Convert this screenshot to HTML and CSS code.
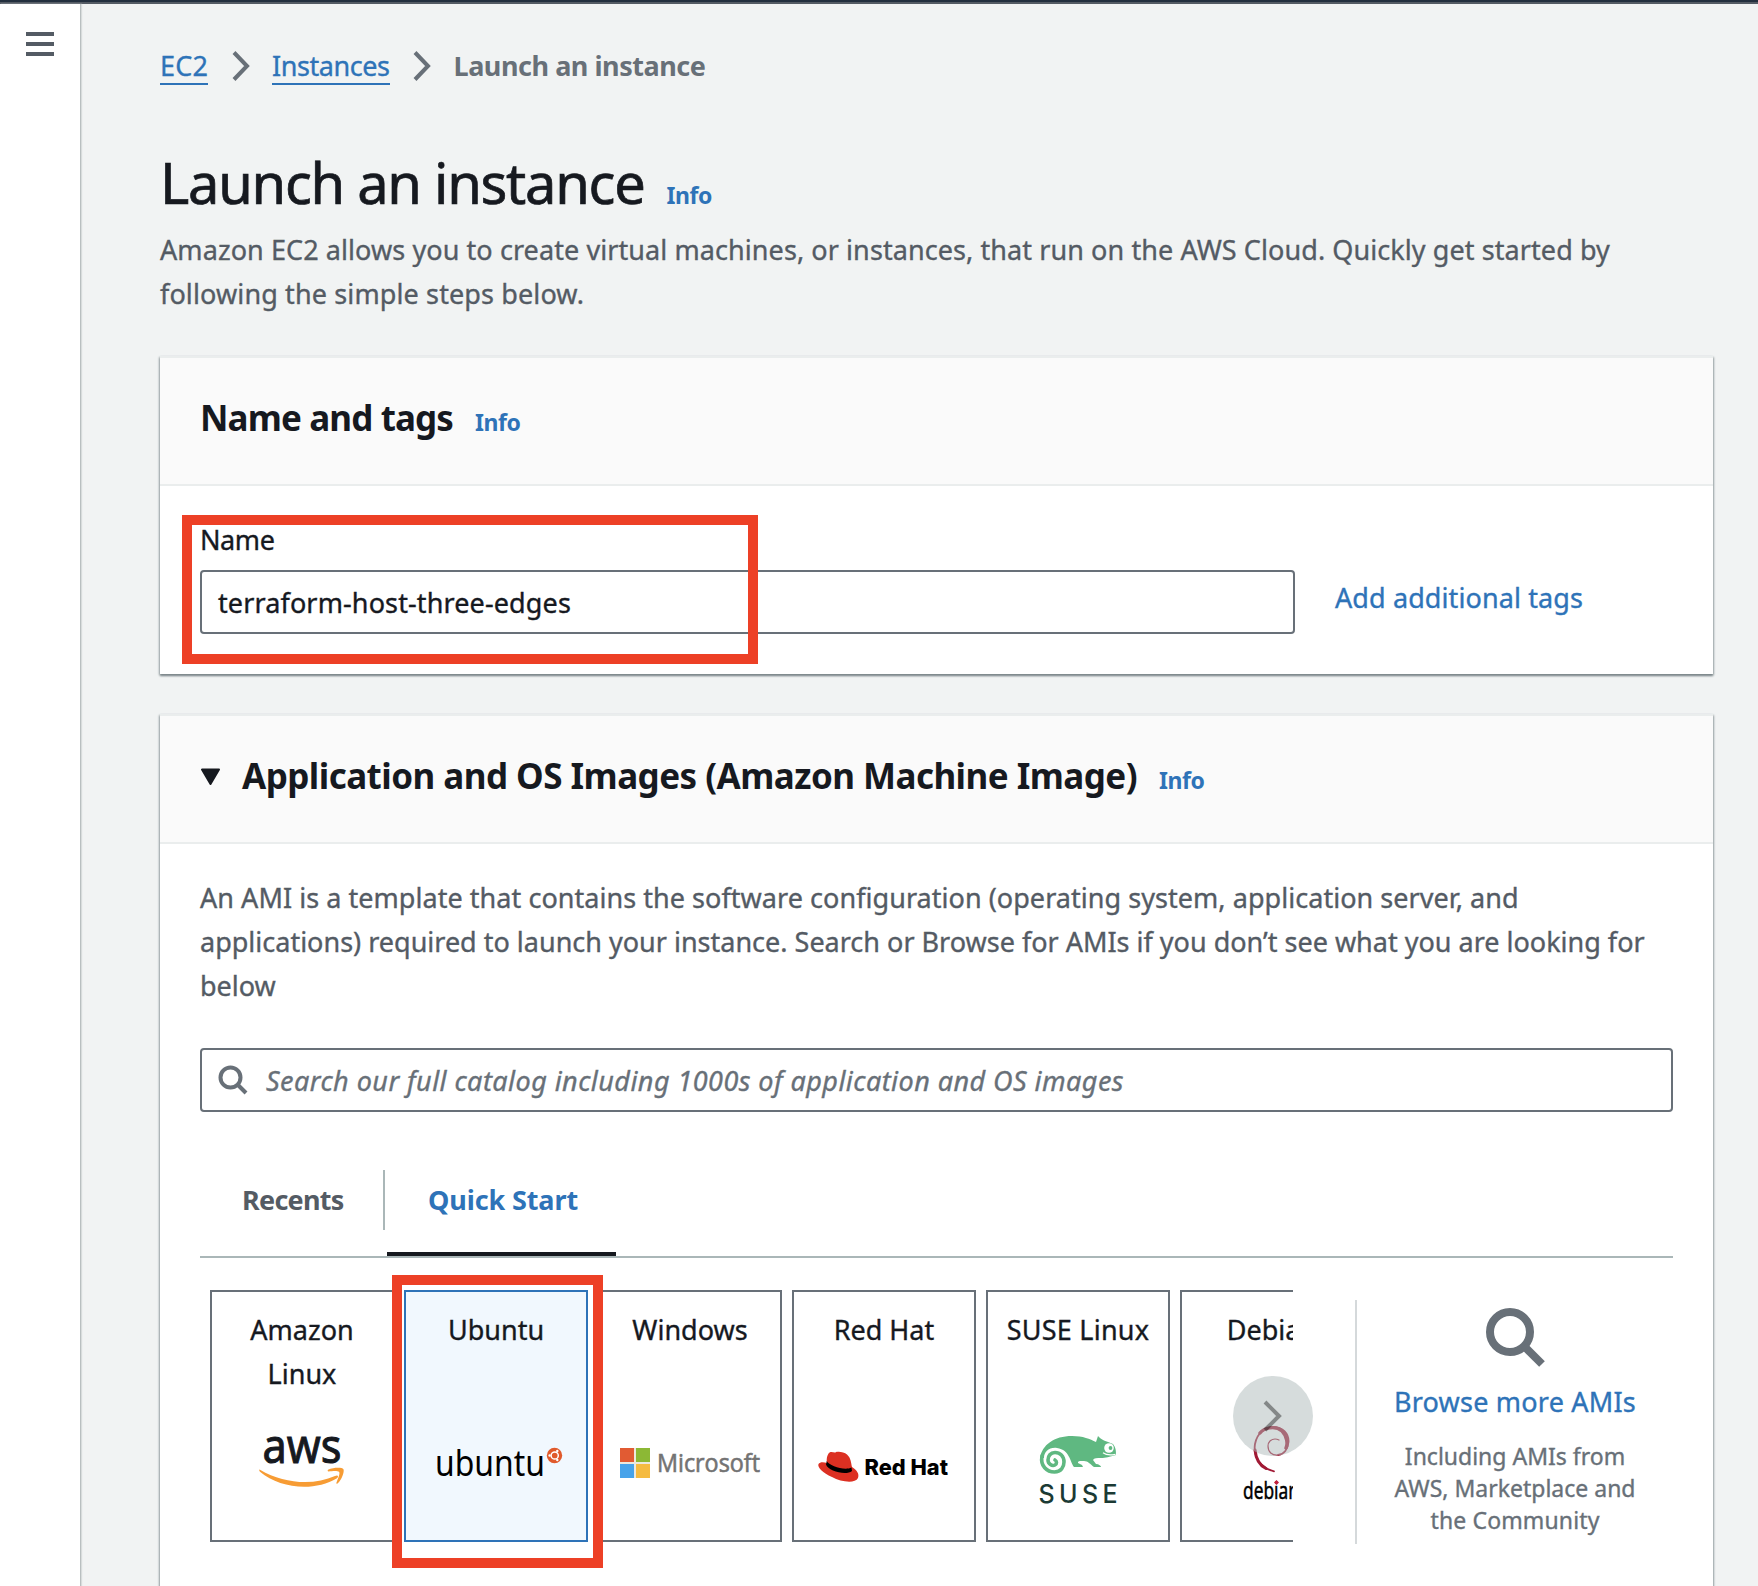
FILE: index.html
```html
<!DOCTYPE html>
<html lang="en">
<head>
<meta charset="utf-8">
<title>Launch an instance | EC2</title>
<link rel="stylesheet" href="styles.css">
</head>
<body>
<div class="topbar"></div>
<div class="shell">
  <nav class="sidebar">
    <button class="menu" aria-label="Open navigation"><span></span><span></span><span></span></button>
  </nav>
  <main class="main">
    <div class="breadcrumb">
      <a class="crumb crumb-ec2">EC2</a>
      <svg class="sep" width="18" height="30" viewBox="0 0 18 30"><path d="M2 1.5L15 15L2 28.5" fill="none" stroke="#687078" stroke-width="4"/></svg>
      <a class="crumb crumb-instances">Instances</a>
      <svg class="sep" width="18" height="30" viewBox="0 0 18 30"><path d="M2 1.5L15 15L2 28.5" fill="none" stroke="#687078" stroke-width="4"/></svg>
      <span class="crumb-current">Launch an instance</span>
    </div>
    <div class="title-row"><h1>Launch an instance</h1><a class="info">Info</a></div>
    <p class="intro"><span class="i1">Amazon EC2 allows you to create virtual machines, or instances, that run on the AWS Cloud. Quickly get started by</span><br><span class="i2">following the simple steps below.</span></p>

    <section class="card">
      <header class="card-head"><h2 class="h-name">Name and tags</h2><a class="info">Info</a></header>
      <div class="name-body">
        <div class="field">
          <label class="label">Name</label>
          <div class="input"><span class="value">terraform-host-three-edges</span></div>
        </div>
        <a class="add-tags">Add additional tags</a>
        <div class="mark mark-name"></div>
      </div>
    </section>

    <section class="card card-ami">
      <header class="card-head">
        <svg class="caret" width="22" height="18" viewBox="0 0 22 18"><path d="M2 1.5H19L10.500 16Z" fill="#16191f" stroke="#16191f" stroke-width="2" stroke-linejoin="round"/></svg>
        <h2 class="h-ami">Application and OS Images (Amazon Machine Image)</h2><a class="info">Info</a>
      </header>
      <div class="ami-body">
        <p class="ami-text"><span class="a1">An AMI is a template that contains the software configuration (operating system, application server, and</span><br><span class="a2">applications) required to launch your instance. Search or Browse for AMIs if you don’t see what you are looking for</span><br><span class="a3">below</span></p>
        <div class="input search">
          <svg width="32" height="32" viewBox="0 0 32 32" fill="none" stroke="#687078" stroke-width="4"><circle cx="12.500" cy="13.500" r="10"/><path d="M19.500 20.500L28 29"/></svg>
          <span class="placeholder">Search our full catalog including 1000s of application and OS images</span>
        </div>
        <div class="tabs">
          <div class="tab"><span class="t-rec">Recents</span></div>
          <div class="tab-divider"></div>
          <div class="tab active"><span class="t-quick">Quick Start</span></div>
        </div>
        <div class="picker">
          <div class="carousel">
            <div class="tile"><span>Amazon</span><span>Linux</span>
              <svg class="logo" width="180" height="80" viewBox="0 0 180 80"><text x="50.500" y="33" class="lg-aws" textLength="79" lengthAdjust="spacingAndGlyphs">aws</text><path d="M48 39.700C72 54 102 55.500 123 46C126 44.500 127 46.500 125 48.200C102 62 68 58.500 48 41.700C47 40.700 47 39.200 48 39.700Z" fill="#f79c34"/><path d="M116 39.700C122 37.200 130 37.200 131.500 39.200C132.500 41.700 130 49.500 125.500 53.500C124.500 54 124 53.500 124.500 52.500C126 48.500 128.500 43 127 41.700C125.500 40.500 120 41 116.500 41.500C115.500 41.500 115.500 40.200 116 39.700Z" fill="#f79c34"/></svg>
            </div>
            <div class="tile selected"><span>Ubuntu</span>
              <svg class="logo" width="180" height="80" viewBox="0 0 180 80"><text x="29" y="45.500" class="lg-ubuntu" textLength="110" lengthAdjust="spacingAndGlyphs">ubuntu</text><circle cx="148.500" cy="25.500" r="7.700" fill="#e05a2b"/><circle cx="148.700" cy="25.500" r="3.600" fill="none" stroke="#fff" stroke-width="1.500"/><circle cx="143.600" cy="25.500" r="1.200" fill="#fff"/><circle cx="151.300" cy="21" r="1.200" fill="#fff"/><circle cx="151.300" cy="30" r="1.200" fill="#fff"/></svg>
            </div>
            <div class="tile"><span>Windows</span>
              <svg class="logo" width="180" height="80" viewBox="0 0 180 80"><path d="M20 18h30v30H20z" fill="#ece9df"/><path d="M20 18h14v14H20z" fill="#e15b33"/><path d="M36 18h14v14H36z" fill="#8cb835"/><path d="M20 34h14v14H20z" fill="#47a3ea"/><path d="M36 34h14v14H36z" fill="#f5bb41"/><text x="57" y="42" class="lg-ms" textLength="103" lengthAdjust="spacingAndGlyphs">Microsoft</text></svg>
            </div>
            <div class="tile"><span>Red Hat</span>
              <svg class="logo" width="180" height="80" viewBox="0 0 180 80"><path d="M33 33C32 28 34 23 36 22.300C38 21.500 40 23 41.500 22.500C43 21.300 50 21.700 53 24.500C57 28 57 33 58 37C63 40 65.500 44 64 48C61 54 47 52 38 47C29 43 23 37 24.500 34C26 31.500 30 32 33 33Z" fill="#dc3022"/><path d="M32.800 31C35 36 51 41 57.500 37.500L58 41C52 46 34 41 32 34.500Z" fill="#000"/><text x="70.500" y="44.500" class="lg-rh" textLength="83.500" lengthAdjust="spacingAndGlyphs">Red Hat</text></svg>
            </div>
            <div class="tile"><span class="n-suse">SUSE Linux</span>
              <svg class="logo" width="180" height="80" viewBox="0 0 180 80"><g transform="translate(52 6)"><path d="M0 22C2 9 14 0 32 0C43 0 50 3 56 6L58 0C61 4 66 5 73 8C76 12 76 15 76 19C69 21 66 22 61 22C57 22 54 22 53 24L56 28C59 28 61 30 61 31H54C50 28 48 25 44 25C39 25 38 25 38 27L42 29L43 31H34C30 26 30 14 17 12C9 11 4 16 4 22Z" fill="#5fb881"/><path d="M2 20C0 30 7 36 14.500 36C21 36 24 31 24 26C24 20 20 16.500 15 16.500C10.500 16.500 8 20 8 24C8 28 12 30.500 15 29C17 28 17 25 15 24" fill="none" stroke="#5fb881" stroke-width="3.600" stroke-linecap="round"/><circle cx="69" cy="12" r="4.800" fill="#fff"/><circle cx="70.500" cy="12" r="1.900" fill="#5fb881"/><path d="M63 16.700C66 19 71 19.300 75.500 18.300" fill="none" stroke="#fff" stroke-width="1.200"/></g><text x="50.500" y="72.500" class="lg-suse" textLength="79" lengthAdjust="spacing">SUSE</text></svg>
            </div>
            <div class="tile"><span>Debian</span>
              <svg class="logo" width="180" height="80" viewBox="0 0 180 80"><g fill="none" stroke="#a11a35" stroke-linecap="round"><path d="M92 41.300C78 38 71 26 73 14C75 3 83 -3 91 -3C101 -3 107 4 106.500 12C106 19 102 24.500 96 25" stroke-width="1.800"/><path d="M73 20C74 30 79 36 84 38.500" stroke-width="3"/><path d="M78 3C82 -2 93 -5 100 1C105 6 106 14 104 18" stroke-width="3.400"/><path d="M96 25C90 25.500 86 22 86 16C86 12 89 9 93 9C95 9 96 9.500 97 10" stroke-width="1.200"/></g><text x="61" y="69" class="lg-deb" textLength="56" lengthAdjust="spacingAndGlyphs">debian</text><path d="M94.500 50l2.500 2.500l-2.500 2.500l-2.500-2.500z" fill="#c01f3d"/></svg>
            </div>
          </div>
          <button class="next" aria-label="Next"><svg width="24" height="36" viewBox="0 0 24 36"><path d="M4 4L18 18L4 32" fill="none" stroke="#000" stroke-opacity=".38" stroke-width="4"/></svg></button>
          <div class="mark mark-ubuntu"></div>
          <div class="browse">
            <svg width="62" height="62" viewBox="0 0 62 62" fill="none" stroke="#687078" stroke-width="8"><circle cx="26" cy="26" r="20"/><path d="M40 40L58 58"/></svg>
            <a class="browse-link">Browse more AMIs</a>
            <p class="browse-note"><span>Including AMIs from</span><br><span>AWS, Marketplace and</span><br><span class="b3">the Community</span></p>
          </div>
        </div>
      </div>
    </section>
  </main>
</div>
</body>
</html>
```
FILE: styles.css
```css
* { box-sizing: border-box; }
html, body { height: 100%; }
body {
  margin: 0;
  overflow: hidden;
  background: #f1f3f3;
  color: #16191f;
  font-family: "Noto Sans", "Open Sans", sans-serif;
  font-size: 27px;
  line-height: 44px;
  -webkit-text-stroke: 0.35px currentColor;
  display: flex;
  flex-direction: column;
  white-space: nowrap;
}
h1, h2, p { margin: 0; }
a { color: #2e73b8; }
button { border: 0; background: none; padding: 0; }
svg { -webkit-text-stroke: 0; }

.topbar { height: 4px; flex: none; background: #232f3e; border-bottom: 2px solid #545b64; }
.shell { flex: 1; min-height: 0; display: flex; }
.sidebar { flex: none; width: 81px; background: #fff; border-right: 1px solid #b9bfc0; box-shadow: 1px 0 1px #d8dcdc; padding: 28px 26px; }
.menu { display: flex; flex-direction: column; gap: 6px; width: 28px; }
.menu span { height: 4px; background: #545b64; }

.main { flex: 1; min-width: 0; padding: 40px 45px 0 79px; display: flex; flex-direction: column; }
.breadcrumb { display: flex; height: 44px; flex: none; }
.crumb { height: 41px; border-bottom: 2px solid #2e73b8; }
.crumb-ec2 { letter-spacing: 0.156px; }
.crumb-instances { letter-spacing: -0.443px; }
.sep { margin: 7px 22.5px 0 23.5px; }
.crumb-current { font-weight: 700; color: #687078; letter-spacing: -0.46px; -webkit-text-stroke: 0; }

.title-row { display: flex; align-items: baseline; margin-top: 60px; height: 68px; flex: none; }
h1 { font-size: 56px; line-height: 68px; font-weight: 400; letter-spacing: -1.261px; -webkit-text-stroke-width: 0.7px; }
.info { font-size: 23px; font-weight: 700; margin-left: 22px; letter-spacing: -0.422px; -webkit-text-stroke: 0; }
.intro { margin: 12px 0 40px; color: #545b64; flex: none; }
.i1 { letter-spacing: 0.08px; }
.i2 { letter-spacing: 0.123px; }

.card { background: #fff; border-top: 2px solid #eaeded; box-shadow: 0 2px 2px #7d888b, 1px 1px 2px #b5bcbd, -1px 1px 2px #b5bcbd; margin-bottom: 40px; flex: none; }
.card-ami { flex: 1; margin-bottom: -10px; }
.card-head { display: flex; align-items: baseline; height: 128px; padding: 38px 40px 0; background: #fafafa; border-bottom: 2px solid #eaeded; }
h2 { font-size: 35px; line-height: 44px; font-weight: 700; -webkit-text-stroke: 0; }
.h-name { letter-spacing: -0.871px; }
.h-ami { letter-spacing: -0.539px; }
.caret { margin-right: 20px; align-self: flex-start; margin-top: 14px; }

.name-body { position: relative; display: flex; align-items: flex-end; padding: 32px 40px 40px; }
.field { width: 1095px; margin-right: 40px; }
.label { display: block; letter-spacing: -0.41px; }
.value { letter-spacing: 0.123px; }
.input { height: 64px; border: 2px solid #687078; border-radius: 4px; padding: 9px 16px; background: #fff; }
.field .input { margin-top: 8px; }
.add-tags { margin-bottom: 14px; letter-spacing: 0.1px; }
.mark { position: absolute; border: 10px solid #ed4026; }
.mark-name { left: 22px; top: 29px; width: 576px; height: 149px; }

.ami-body { padding: 32px 40px 0; }
.ami-text { color: #545b64; }
.a1 { letter-spacing: 0.044px; }
.search { display: flex; align-items: center; gap: 16px; margin-top: 40px; color: #687078; font-style: italic; }
.placeholder { padding-top: 1px; letter-spacing: 0.446px; }
.tabs { display: flex; margin-top: 58px; height: 88px; border-bottom: 2px solid #aab7b8; font-weight: 700; -webkit-text-stroke: 0; }
.tab { padding: 8px 40px 0 42px; width: 183px; color: #545b64; }
.tab-divider { width: 2px; height: 60px; margin-right: 2px; background: #aab7b8; }
.tab.active { width: 229px; padding-left: 41px; color: #2e73b8; border-bottom: 4px solid #16191f; }
.t-rec { letter-spacing: -0.717px; }
.t-quick { letter-spacing: -0.112px; }

.picker { position: relative; display: flex; margin-top: 32px; }
.carousel { width: 1093px; padding-left: 10px; display: flex; gap: 10px; overflow: hidden; }
.tile { flex: none; width: 184px; height: 252px; border: 2px solid #687078; padding-top: 16px; display: flex; flex-direction: column; align-items: center; }
.tile.selected { border-color: #2e73b8; background: #f1f8fe; }
.n-suse { letter-spacing: 0.231px; }
.logo { margin-top: auto; margin-bottom: 30px; overflow: visible; }
.next { position: absolute; left: 1033px; top: 86px; width: 80px; height: 80px; border-radius: 50%; background: rgba(174, 185, 185, .5); display: flex; align-items: center; justify-content: center; }
.mark-ubuntu { left: 192px; top: -15px; width: 211px; height: 293px; }
.browse { width: 318px; margin: 10px 0 0 62px; height: 244px; border-left: 2px solid #d5d9db; display: flex; flex-direction: column; align-items: center; padding-top: 6px; }
.browse-link { margin-top: 12px; letter-spacing: 0.21px; }
.browse-note { margin-top: 16px; font-size: 23px; line-height: 32px; color: #687078; text-align: center; }
.b3 { letter-spacing: 0.129px; }

.lg-aws { font: 400 48px "Noto Sans", sans-serif; fill: #16191f; stroke: #16191f; stroke-width: 1px; }
.lg-ubuntu { font: 400 36px "Noto Sans", sans-serif; }
.lg-ms { font: 400 25px "Open Sans", sans-serif; fill: #737373; stroke: #737373; stroke-width: 0.6px; }
.lg-rh { font: 800 22px Inter, sans-serif; }
.lg-suse { font: 500 25px Inter, sans-serif; fill: #1b3a34; }
.lg-deb { font: 400 24px "Noto Sans", sans-serif; stroke: #000; stroke-width: 0.5px; }
```
